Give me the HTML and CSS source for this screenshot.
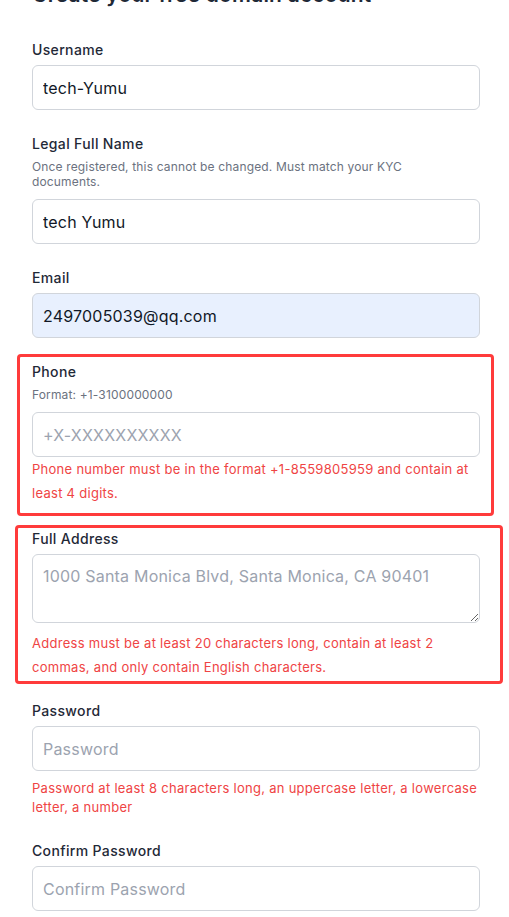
FILE: index.html
```html
<!DOCTYPE html>
<html lang="en">
<head>
<meta charset="utf-8">
<title>Create your free domain account</title>
<link rel="stylesheet" href="styles.css">
</head>
<body>
<form class="form">
  <h1 class="title">Create your free domain account</h1>

  <div class="field">
    <label class="label">Username</label>
    <input class="input" type="text" value="tech-Yumu">
  </div>

  <div class="field">
    <label class="label">Legal Full Name</label>
    <p class="hint hint-wrap">Once registered, this cannot be changed. Must match your KYC documents.</p>
    <input class="input" type="text" value="tech Yumu">
  </div>

  <div class="field">
    <label class="label">Email</label>
    <input class="input input-filled" type="email" value="2497005039@qq.com">
  </div>

  <div class="field">
    <label class="label">Phone</label>
    <p class="hint">Format: +1-3100000000</p>
    <input class="input" type="text" placeholder="+X-XXXXXXXXXX">
    <p class="error error-tight">Phone number must be in the format +1-8559805959 and contain at least 4 digits.</p>
    <div class="mark mark-phone"></div>
  </div>

  <div class="field field-address">
    <label class="label">Full Address</label>
    <textarea class="input textarea" placeholder="1000 Santa Monica Blvd, Santa Monica, CA 90401"></textarea>
    <p class="error error-loose">Address must be at least 20 characters long, contain at least 2 commas, and only contain English characters.</p>
    <div class="mark mark-address"></div>
  </div>

  <div class="field">
    <label class="label">Password</label>
    <input class="input" type="password" placeholder="Password">
    <p class="error error-small">Password at least 8 characters long, an uppercase letter, a lowercase letter, a number</p>
  </div>

  <div class="field">
    <label class="label">Confirm Password</label>
    <input class="input" type="password" placeholder="Confirm Password">
  </div>
</form>
</body>
</html>
```

FILE: styles.css
```css
* { box-sizing: border-box; }

html, body {
  margin: 0;
  background: #ffffff;
  overflow: hidden;
}

body {
  font-family: Inter, "Open Sans", "Liberation Sans", sans-serif;
  color: #1f2937;
}

.form {
  padding: 0 29px 0 32px;
}

.title {
  margin: -19px 0 31px;
  font-size: 21px;
  line-height: 28px;
  font-weight: 600;
  letter-spacing: 0.2px;
  color: #1f2937;
}

.field {
  position: relative;
  margin-bottom: 24px;
}

.field-address {
  margin-bottom: 22px;
}

.label {
  display: block;
  font-size: 14px;
  line-height: 20px;
  font-weight: 500;
  letter-spacing: 0.35px;
  color: #1f2937;
  margin-bottom: 5px;
}

.hint {
  margin: 0 0 10px;
  font-size: 12px;
  line-height: 15px;
  letter-spacing: 0.15px;
  color: #6b7280;
}

.hint-wrap {
  max-width: 420px;
}

.input {
  display: block;
  width: 100%;
  height: 45px;
  padding: 0 10px;
  border: 1px solid #d1d5db;
  border-radius: 6px;
  background: #ffffff;
  font-family: inherit;
  font-size: 16px;
  letter-spacing: 0.2px;
  color: #111827;
  outline: none;
}

.input::placeholder {
  color: #9ca3af;
  opacity: 1;
}

.input-filled {
  background: #e8f0fe;
}

.textarea {
  height: 69px;
  padding: 9px 10px;
  line-height: 24px;
  resize: vertical;
}

.error {
  margin: 0;
  font-size: 13px;
  letter-spacing: 0.28px;
  color: #ef4444;
}

.error-tight {
  line-height: 24px;
}

.error-loose {
  margin-top: 8px;
  line-height: 24px;
}

.error-small {
  margin-top: 8px;
  line-height: 19px;
}

.mark {
  position: absolute;
  border: 3px solid #ff3b3b;
  border-radius: 4px;
  pointer-events: none;
}

.mark-phone {
  top: -8px;
  left: -15px;
  right: -14px;
  bottom: -11px;
}

.mark-address {
  top: -4px;
  left: -17px;
  right: -23px;
  bottom: -5px;
}
```
